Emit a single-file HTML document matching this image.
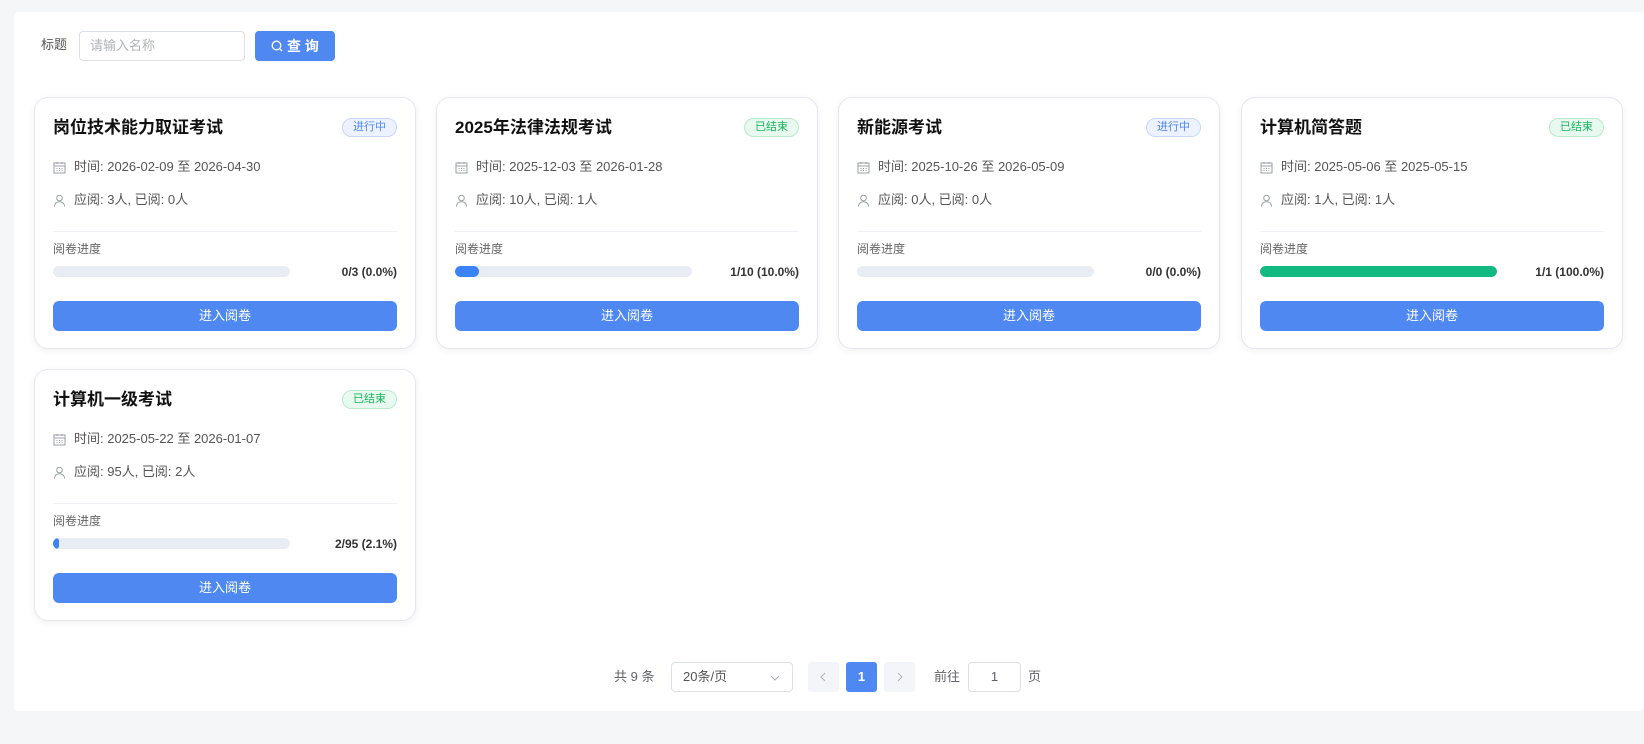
<!DOCTYPE html>
<html><head><meta charset="utf-8"><style>
*{box-sizing:border-box;margin:0;padding:0}
body{width:1644px;height:744px;background:#f5f6f8;font-family:"Liberation Sans","Noto Sans CJK SC",sans-serif;position:relative;overflow:hidden;color:#606266}
.panel{position:absolute;left:14px;top:12px;width:1630px;height:699px;background:#fff;border-radius:4px}
.abs{position:absolute}
.card{position:absolute;width:382px;height:252px;border:1px solid #e4e7ed;border-radius:14px;background:#fff;box-shadow:0 2px 8px rgba(0,0,0,.06)}
.card .t{position:absolute;left:18px;top:18px;font-size:17px;line-height:24px;font-weight:bold;color:#111}
.badge{position:absolute;right:18px;top:20px;height:19px;padding:0 10px;border-radius:10px;font-size:11px;line-height:17px}
.b1{background:#ecf2ff;border:1px solid #c6d8fb;color:#4f87f0}
.b2{background:#e8f9ef;border:1px solid #b7ebcb;color:#19b35b}
.row{position:absolute;left:18px;font-size:13px;line-height:18px;color:#555;display:flex;align-items:center;gap:8px}
.hr{position:absolute;left:18px;right:18px;top:133px;border-top:1px solid #eef0f3}
.lbl{position:absolute;left:18px;top:143px;font-size:12px;line-height:16px;color:#666}
.bar{position:absolute;left:18px;top:168px;width:237px;height:11px;border-radius:6px;background:#e9ecf3;overflow:hidden}
.bar i{display:block;height:100%;border-radius:6px}
.pct{position:absolute;right:18px;top:167px;font-size:12px;line-height:14px;font-weight:bold;color:#333}
.btn{position:absolute;left:18px;right:18px;top:203px;height:30px;border-radius:6px;background:#4f88f0;color:#fff;font-size:13px;text-align:center;line-height:30px}
</style></head><body>
<div class="panel"></div>
<div class="abs" style="left:41px;top:36px;font-size:13px;line-height:18px;color:#555">标题</div>
<div class="abs" style="left:79px;top:31px;width:166px;height:30px;border:1px solid #dcdfe6;border-radius:4px;font-size:13px;color:#b0b3b8;line-height:28px;padding-left:10px">请输入名称</div>
<div class="abs" style="left:255px;top:31px;width:80px;height:30px;background:#4f88f0;border-radius:4px;color:#fff;font-size:14px;line-height:30px;text-align:center;font-weight:bold"><svg width="12" height="12" viewBox="0 0 12 12" style="vertical-align:-1px;margin-right:4px"><circle cx="5.5" cy="5.5" r="4.3" fill="none" stroke="#fff" stroke-width="1.3"/><path d="M8.6 8.6L11 11" stroke="#fff" stroke-width="1.3"/></svg>查 询</div>

<div id="c"></div>
<script>
const cal='<svg width="13" height="13" viewBox="0 0 13 13"><rect x="1" y="2" width="11" height="10" fill="none" stroke="#9aa0a8"/><path d="M1 5h11M4 1v2M9 1v2M3.5 7.5h1M6 7.5h1M8.5 7.5h1M3.5 9.5h1M6 9.5h1M8.5 9.5h1" stroke="#9aa0a8"/></svg>';
const usr='<svg width="13" height="13" viewBox="0 0 13 13"><circle cx="6.5" cy="4" r="2.8" fill="none" stroke="#9aa0a8"/><path d="M1.5 12.5c0-3 2.2-4.8 5-4.8s5 1.8 5 4.8" fill="none" stroke="#9aa0a8"/></svg>';
const d=[
[34,97,'岗位技术能力取证考试',1,'2026-02-09 至 2026-04-30','应阅: 3人, 已阅: 0人',0,'0/3 (0.0%)','#4f88f0'],
[436,97,'2025年法律法规考试',2,'2025-12-03 至 2026-01-28','应阅: 10人, 已阅: 1人',10,'1/10 (10.0%)','#3b82f6'],
[838,97,'新能源考试',1,'2025-10-26 至 2026-05-09','应阅: 0人, 已阅: 0人',0,'0/0 (0.0%)','#4f88f0'],
[1241,97,'计算机简答题',2,'2025-05-06 至 2025-05-15','应阅: 1人, 已阅: 1人',100,'1/1 (100.0%)','#12b981'],
[34,369,'计算机一级考试',2,'2025-05-22 至 2026-01-07','应阅: 95人, 已阅: 2人',2.1,'2/95 (2.1%)','#3b82f6']];
let h='';
for(const c of d){h+=`<div class="card" style="left:${c[0]}px;top:${c[1]}px"><div class="t">${c[2]}</div><div class="badge ${c[3]==1?'b1':'b2'}">${c[3]==1?'进行中':'已结束'}</div>
<div class="row" style="top:60px">${cal}<span>时间: ${c[4]}</span></div>
<div class="row" style="top:93px">${usr}<span>${c[5]}</span></div>
<div class="hr"></div><div class="lbl">阅卷进度</div>
<div class="bar"><i style="width:${c[6]==0?0:Math.max(c[6],2.5)}%;background:${c[8]}"></i></div>
<div class="pct">${c[7]}</div><div class="btn">进入阅卷</div></div>`}
document.getElementById('c').innerHTML=h;
</script>

<div class="abs" style="left:614px;top:668px;font-size:13px;line-height:18px;color:#606266">共 9 条</div>
<div class="abs" style="left:671px;top:662px;width:122px;height:30px;border:1px solid #dcdfe6;border-radius:4px;font-size:13px;line-height:28px;padding-left:11px;color:#555">20条/页<svg width="10" height="6" viewBox="0 0 10 6" style="position:absolute;right:12px;top:12px"><path d="M1 1l4 4 4-4" fill="none" stroke="#a8abb2"/></svg></div>
<div class="abs" style="left:808px;top:662px;width:31px;height:30px;background:#f4f5f8;border-radius:3px"><svg width="31" height="30"><path d="M17 11l-4 4 4 4" fill="none" stroke="#b0b3b8"/></svg></div>
<div class="abs" style="left:846px;top:662px;width:31px;height:30px;background:#4f88f0;border-radius:3px;color:#fff;font-weight:bold;font-size:13px;text-align:center;line-height:30px">1</div>
<div class="abs" style="left:884px;top:662px;width:31px;height:30px;background:#f4f5f8;border-radius:3px"><svg width="31" height="30"><path d="M14 11l4 4-4 4" fill="none" stroke="#b0b3b8"/></svg></div>
<div class="abs" style="left:934px;top:668px;font-size:13px;line-height:18px">前往</div>
<div class="abs" style="left:968px;top:662px;width:53px;height:30px;border:1px solid #dcdfe6;border-radius:4px;text-align:center;line-height:28px;font-size:13px">1</div>
<div class="abs" style="left:1028px;top:668px;font-size:13px;line-height:18px">页</div>
</body></html>
